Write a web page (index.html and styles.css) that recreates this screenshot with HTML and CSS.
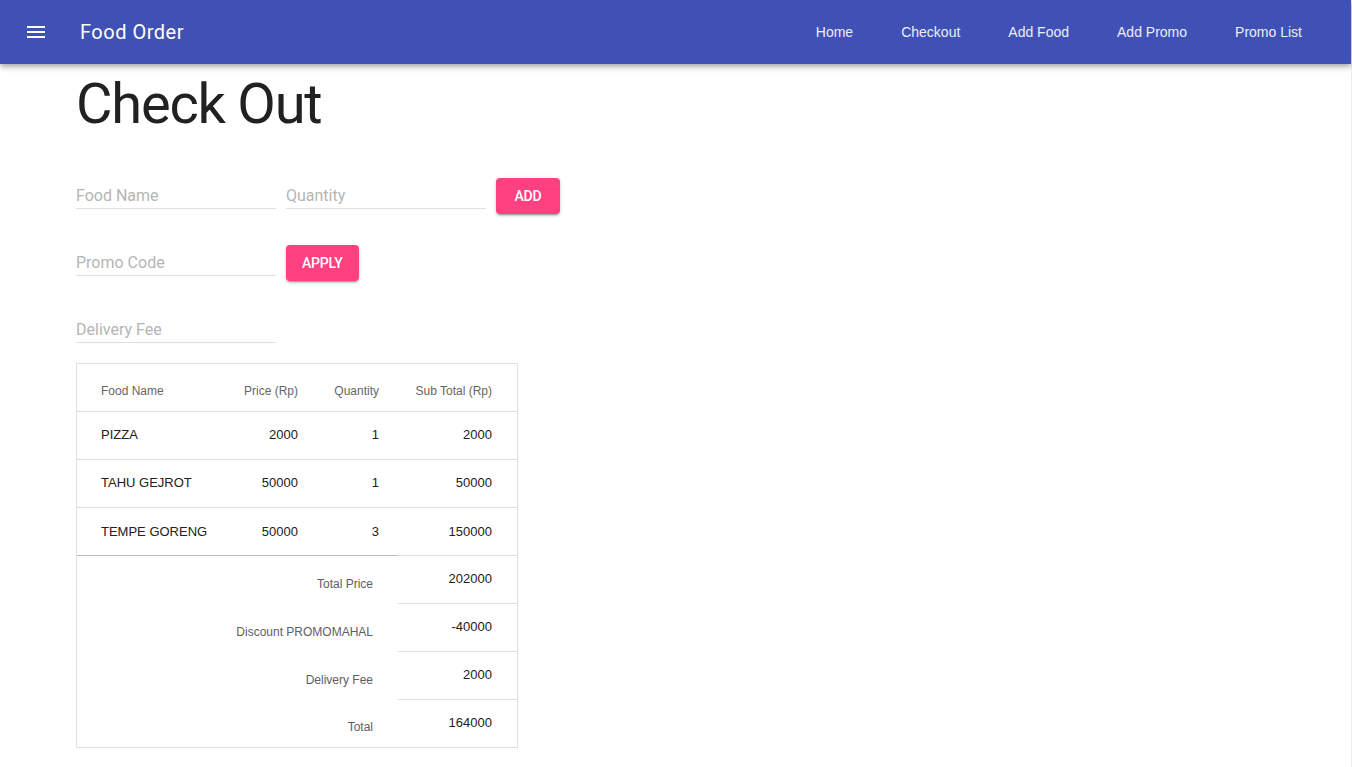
FILE: index.html
```html
<!DOCTYPE html>
<html lang="en">
<head>
<meta charset="utf-8">
<title>Food Order</title>
<link rel="stylesheet" href="styles.css">
</head>
<body>
<div class="page">
  <header class="toolbar">
    <div class="brand">
      <svg class="menu-icon" width="24" height="24" viewBox="0 0 24 24"><path fill="#fff" d="M3 18h18v-2H3v2zm0-5h18v-2H3v2zm0-7v2h18V6H3z"/></svg>
      <span class="brand-title">Food Order</span>
    </div>
    <nav class="nav">
      <a class="nav-link">Home</a>
      <a class="nav-link">Checkout</a>
      <a class="nav-link">Add Food</a>
      <a class="nav-link">Add Promo</a>
      <a class="nav-link">Promo List</a>
    </nav>
  </header>

  <main class="content">
    <h1 class="title">Check Out</h1>

    <div class="form">
      <div class="form-row">
        <div class="field"><input class="input" placeholder="Food Name"></div>
        <div class="field"><input class="input" placeholder="Quantity"></div>
        <button class="btn">ADD</button>
      </div>
      <div class="form-row">
        <div class="field"><input class="input" placeholder="Promo Code"></div>
        <button class="btn">APPLY</button>
      </div>
      <div class="form-row">
        <div class="field"><input class="input" placeholder="Delivery Fee"></div>
      </div>
    </div>

    <div class="order-table">
      <div class="grid">
        <div class="cell head left">Food Name</div>
        <div class="cell head right">Price (Rp)</div>
        <div class="cell head right">Quantity</div>
        <div class="cell head right last">Sub Total (Rp)</div>

        <div class="cell left">PIZZA</div>
        <div class="cell right">2000</div>
        <div class="cell right">1</div>
        <div class="cell right last">2000</div>

        <div class="cell left">TAHU GEJROT</div>
        <div class="cell right">50000</div>
        <div class="cell right">1</div>
        <div class="cell right last">50000</div>

        <div class="cell left end">TEMPE GORENG</div>
        <div class="cell right end">50000</div>
        <div class="cell right end">3</div>
        <div class="cell right last end">150000</div>
      </div>
      <div class="summary">
        <div class="label first">Total Price</div>
        <div class="value first">202000</div>
        <div class="label">Discount PROMOMAHAL</div>
        <div class="value">-40000</div>
        <div class="label">Delivery Fee</div>
        <div class="value">2000</div>
        <div class="label final">Total</div>
        <div class="value final">164000</div>
      </div>
    </div>
  </main>
</div>
</body>
</html>
```

FILE: styles.css
```css
* { box-sizing: border-box; }

html, body {
  margin: 0;
  padding: 0;
  background: #fff;
}

.page {
  min-height: 100vh;
  border-right: 1px solid #ececec;
  font-family: Roboto, "Liberation Sans", sans-serif;
}

.toolbar {
  height: 64px;
  background: #3f51b5;
  display: flex;
  align-items: center;
  justify-content: space-between;
  padding: 0 25px 0 24px;
  box-shadow: 0 2px 4px -1px rgba(0,0,0,.2), 0 4px 5px 0 rgba(0,0,0,.14), 0 1px 10px 0 rgba(0,0,0,.12);
  position: relative;
  z-index: 2;
}

.brand {
  display: flex;
  align-items: center;
}

.menu-icon {
  display: block;
  margin-right: 32px;
}

.brand-title {
  color: #fff;
  font-family: Roboto, sans-serif;
  font-size: 20px;
  font-weight: 400;
  letter-spacing: 0.5px;
}

.nav {
  display: flex;
  align-items: center;
}

.nav-link {
  font-family: "Liberation Sans", Arial, sans-serif;
  font-size: 14px;
  color: #eceef8;
  padding: 0 24px;
  line-height: 64px;
}

.content {
  padding: 12px 0 20px 76px;
}

.title {
  margin: 0;
  font-family: Roboto, sans-serif;
  font-size: 56px;
  line-height: 56px;
  font-weight: 400;
  letter-spacing: -1.2px;
  color: #212121;
}

.form {
  margin-top: 46px;
  display: flex;
  flex-direction: column;
  gap: 31px;
}

.form-row {
  display: flex;
  gap: 10px;
  height: 36px;
  align-items: flex-start;
}

.field {
  width: 200px;
  height: 36px;
}

.input {
  display: block;
  width: 200px;
  height: 31px;
  padding: 4px 0 0;
  border: none;
  border-bottom: 1px solid #e0e0e0;
  outline: none;
  font-family: Roboto, sans-serif;
  font-size: 16px;
  color: #212121;
  background: transparent;
}

.input::placeholder {
  color: #b5b5b5;
}

.btn {
  height: 36px;
  min-width: 64px;
  padding: 0 16px;
  border: none;
  border-radius: 4px;
  background: #ff4081;
  color: #fff;
  font-family: Roboto, sans-serif;
  font-size: 14px;
  font-weight: 500;
  letter-spacing: -0.2px;
  box-shadow: 0 3px 1px -2px rgba(0,0,0,.2), 0 2px 2px 0 rgba(0,0,0,.14), 0 1px 5px 0 rgba(0,0,0,.12);
}

.order-table {
  margin-top: 15px;
  width: 442px;
  border: 1px solid #e0e0e0;
  font-family: "Liberation Sans", Arial, sans-serif;
}

.grid {
  display: grid;
  grid-template-columns: 151px 71px 81px 137px;
}

.cell {
  height: 48px;
  display: flex;
  align-items: center;
  border-bottom: 1px solid #e0e0e0;
  padding-bottom: 2px;
  font-size: 13px;
  color: #212121;
}

.cell.left { padding-left: 24px; }
.cell.right { justify-content: flex-end; padding-right: 1px; }
.cell.last { padding-right: 25px; }

.cell.head {
  font-size: 12px;
  color: #666;
  padding-top: 7px;
  padding-bottom: 0;
}

.cell.end {
  height: 47px;
  border-bottom: none;
  padding-bottom: 1px;
}

.summary {
  display: grid;
  grid-template-columns: 321px 119px;
}

.label, .value {
  height: 48px;
  display: flex;
  align-items: center;
  justify-content: flex-end;
  padding-right: 25px;
}

.label {
  font-size: 12px;
  color: #5e5e5e;
  padding-top: 7px;
}

.value {
  font-size: 13px;
  color: #212121;
  border-bottom: 1px solid #e0e0e0;
  padding-bottom: 2px;
}

.label.first {
  height: 49px;
  border-top: 1px solid #bdbdbd;
  padding-top: 8px;
}

.value.first {
  height: 49px;
  border-top: 1px solid #e0e0e0;
}

.label.final, .value.final {
  height: 47px;
  border-bottom: none;
}
```
